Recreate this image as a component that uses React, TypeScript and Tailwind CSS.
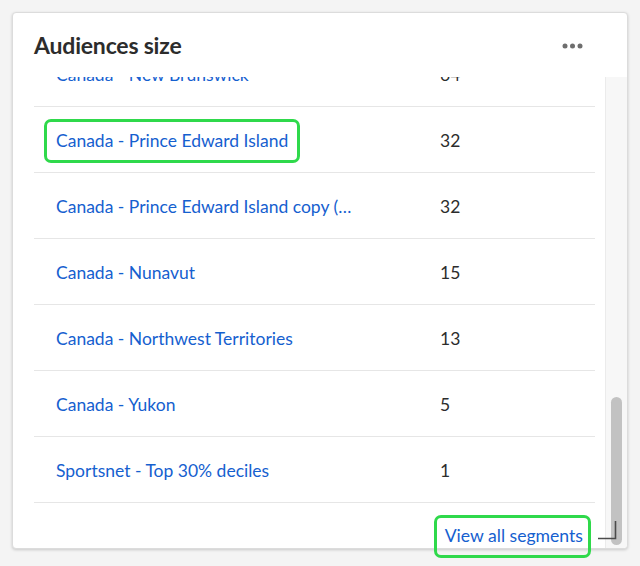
const rows = [
  { name: 'Canada - New Brunswick', size: 64 },
  { name: 'Canada - Prince Edward Island', size: 32, marked: true },
  { name: 'Canada - Prince Edward Island copy (…', size: 32 },
  { name: 'Canada - Nunavut', size: 15 },
  { name: 'Canada - Northwest Territories', size: 13 },
  { name: 'Canada - Yukon', size: 5 },
  { name: 'Sportsnet - Top 30% deciles', size: 1 },
];

const font = { fontFamily: '"Lato", "Liberation Sans", sans-serif' };

export default function App() {
  return (
    <div className="min-h-[566px] bg-[#f4f4f4] pt-[12px] pl-[12px]" style={font}>
      <div className="relative flex h-[537px] w-[616px] flex-col rounded-[4px] border border-[#dcdcdc] bg-white shadow-[0_1px_3px_rgba(0,0,0,0.18)]">
        <div className="flex h-[64px] shrink-0 items-center justify-between pl-[21px] pr-[44px]">
          <h2 className="text-[23px] font-bold tracking-[-0.2px] text-[#2c2c2c]">Audiences size</h2>
          <svg width="21" height="6" viewBox="0 0 21 6" className="mt-[1px]">
            <circle cx="3" cy="3" r="2.5" fill="#6e6e6e" />
            <circle cx="10.5" cy="3" r="2.5" fill="#6e6e6e" />
            <circle cx="18" cy="3" r="2.5" fill="#6e6e6e" />
          </svg>
        </div>

        <div className="flex min-h-0 flex-1">
          <div className="ml-[21px] mr-[10px] flex min-w-0 flex-1 flex-col">
            <div className="flex min-h-0 flex-1 flex-col justify-end overflow-hidden">
              {rows.map((r) => (
                <div key={r.name} className="flex h-[66px] shrink-0 items-center border-b border-[#e6e6e6] pt-[3px] text-[17.5px]">
                  <div className="w-[406px] pl-[22px]">
                    <span className="relative text-[#1560cf]">
                      {r.name}
                      {r.marked && (
                        <span className="absolute -bottom-[12px] -left-[12px] -right-[12px] -top-[11px] rounded-[7px] border-[3px] border-[#2fd94b]" />
                      )}
                    </span>
                  </div>
                  <span className="text-[#2c2c2c]">{r.size}</span>
                </div>
              ))}
            </div>
            <div className="flex h-[45px] shrink-0 items-end justify-end pb-[1px] pr-[12px]">
              <span className="relative text-[17.6px] leading-[22px] text-[#1560cf]">
                View all segments
                <span className="absolute -bottom-[11px] -left-[11px] -right-[8px] -top-[10px] rounded-[7px] border-[3px] border-[#2fd94b]" />
              </span>
            </div>
          </div>
          <div className="flex w-[22px] shrink-0 flex-col items-center justify-end rounded-br-[4px] border-l border-[#ebebeb] bg-[#f7f7f7] pb-[3px]">
            <div className="h-[148px] w-[11px] rounded-full bg-[#c2c2c2]" />
          </div>
        </div>

        <svg width="20" height="20" viewBox="0 0 20 20" className="absolute bottom-[8px] right-[10px]">
          <path d="M18.5 1 V18.5 H1" fill="none" stroke="#4b4b4b" strokeWidth="1.6" />
        </svg>
      </div>
    </div>
  );
}
